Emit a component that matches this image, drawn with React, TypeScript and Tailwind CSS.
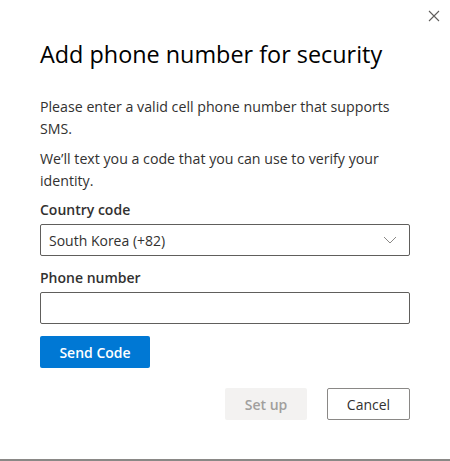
import React from "react";

export default function App() {
  return (
    <div
      className="w-[450px] h-[461px] bg-white relative text-[#323130]"
      style={{ fontFamily: '"Open Sans", "Noto Sans", sans-serif' }}
    >
      <div className="h-[459px] flex flex-col px-[40px]">
        <div className="flex justify-end -mr-[30px] pt-[10px] h-[34px]">
          <svg width="12" height="12" viewBox="0 0 12 12">
            <path d="M1 1 L11 11 M11 1 L1 11" stroke="#605e5c" strokeWidth="1.1" />
          </svg>
        </div>
        <h1 className="text-[23.4px] leading-[32px] text-black mt-[4px]">
          Add phone number for security
        </h1>
        <p className="text-[14.2px] leading-[22px] mt-[26px] text-[#323130]">
          Please enter a valid cell phone number that supports SMS.
        </p>
        <p className="text-[14.2px] leading-[22px] mt-[8px] text-[#323130]">
          We’ll text you a code that you can use to verify your identity.
        </p>
        <label className="text-[14px] leading-[20px] font-semibold mt-[8px]">
          Country code
        </label>
        <div className="mt-[4px] h-[32px] border border-[#605e5c] rounded-[2px] flex items-center justify-between pl-[8px] pr-[12px]">
          <span className="text-[14px]">South Korea (+82)</span>
          <svg width="14" height="8" viewBox="0 0 14 8">
            <path d="M1 1 L7 7 L13 1" fill="none" stroke="#8a8886" strokeWidth="1" />
          </svg>
        </div>
        <label className="text-[14px] leading-[20px] font-semibold mt-[12px]">
          Phone number
        </label>
        <div className="mt-[4px] h-[32px] border border-[#605e5c] rounded-[2px]" />
        <div className="mt-[12px]">
          <button className="w-[110px] h-[32px] bg-[#0078d4] text-white text-[14px] font-semibold rounded-[2px]">
            Send Code
          </button>
        </div>
        <div className="mt-[20px] flex justify-end gap-[20px]">
          <button className="w-[82px] h-[32px] bg-[#f3f2f1] text-[#a19f9d] text-[14px] font-semibold rounded-[2px]">
            Set up
          </button>
          <button className="w-[83px] h-[32px] bg-white border border-[#8a8886] text-[#323130] text-[14px] rounded-[2px]">
            Cancel
          </button>
        </div>
      </div>
      <div className="h-[2px] bg-[#8a8886]" />
    </div>
  );
}
